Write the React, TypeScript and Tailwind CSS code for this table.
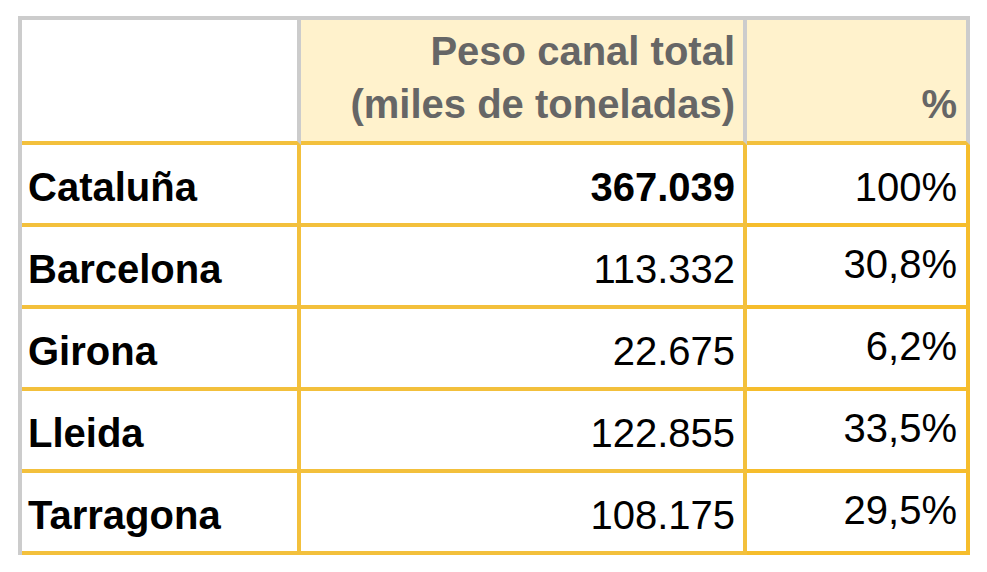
const rows = [
  { name: "Cataluña", peso: "367.039", pct: "100%", strong: true },
  { name: "Barcelona", peso: "113.332", pct: "30,8%" },
  { name: "Girona", peso: "22.675", pct: "6,2%" },
  { name: "Lleida", peso: "122.855", pct: "33,5%" },
  { name: "Tarragona", peso: "108.175", pct: "29,5%" },
]

export default function App() {
  return (
    <div className="w-[987px] h-[572px] bg-white pt-[16px] pl-[18px] font-['Liberation_Sans',Arial,sans-serif] text-black">
      <div className="grid grid-cols-[279px_446px_223px] w-max border-t-4 border-l-4 border-t-[#cccccc] border-l-[#cccccc]">
        {/* header */}
        <div className="h-[125px] bg-white border-r-4 border-b-4 border-r-[#cccccc] border-b-[#f3c03c]"></div>
        <div className="h-[125px] bg-[#fff2cc] border-r-4 border-b-4 border-r-[#cccccc] border-b-[#f3c03c] flex flex-col justify-end items-end pr-[8px] pb-[10px] text-[40px] leading-[53px] font-bold text-[#666666] text-right">
          <span>Peso canal total</span>
          <span>(miles de toneladas)</span>
        </div>
        <div className="h-[125px] bg-[#fff2cc] border-r-4 border-b-4 border-r-[#cccccc] border-b-[#f3c03c] flex flex-col justify-end items-end pr-[9px] pb-[10px] text-[40px] leading-[53px] font-bold text-[#666666]">
          <span>%</span>
        </div>

        {rows.map((r) => (
          <div key={r.name} className="contents">
            <div className="h-[82px] border-r-4 border-b-4 border-[#f3c03c] flex items-center pl-[6px] pt-[6px] text-[40px] leading-none font-bold">
              {r.name}
            </div>
            <div className={`h-[82px] border-r-4 border-b-4 border-[#f3c03c] flex items-center justify-end pr-[8px] pt-[6px] text-[40px] leading-none ${r.strong ? "font-bold" : ""}`}>
              {r.peso}
            </div>
            <div className={`h-[82px] border-r-4 border-b-4 border-[#f6bd2c] flex items-center justify-end pr-[9px] text-[40px] leading-none ${r.strong ? "pt-[6px]" : "pb-[4px]"}`}>
              {r.pct}
            </div>
          </div>
        ))}
      </div>
    </div>
  )
}
